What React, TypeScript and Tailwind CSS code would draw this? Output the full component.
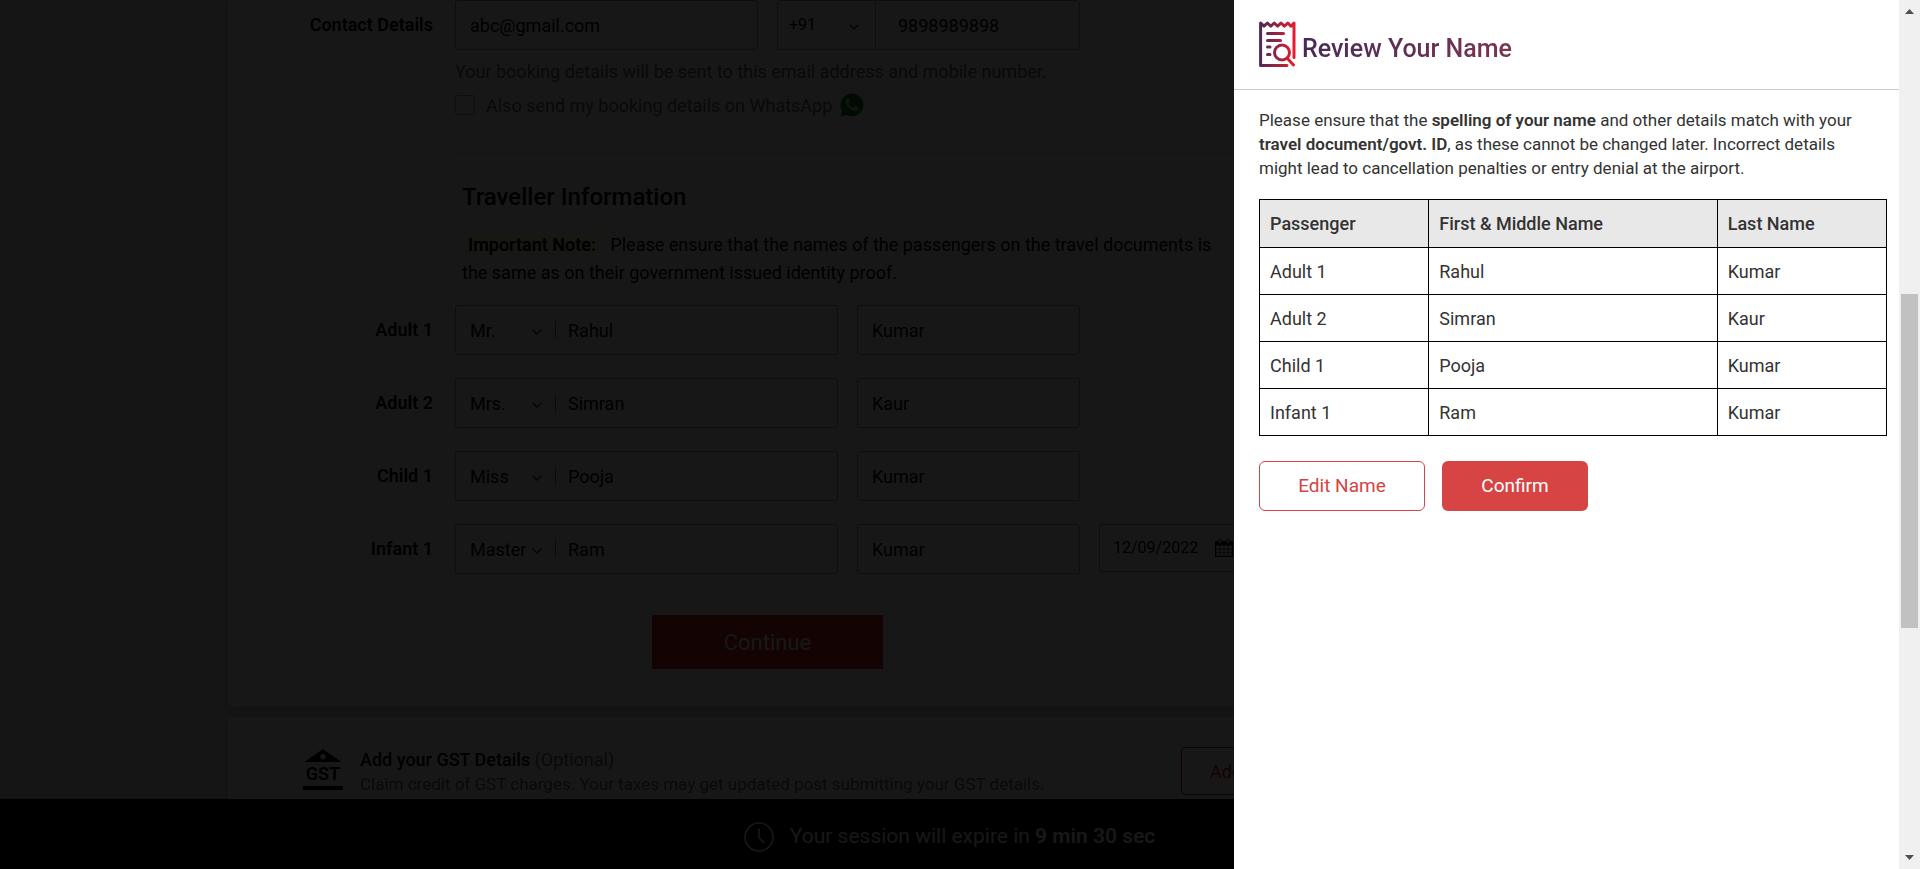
import type { ReactNode } from "react";

type Passenger = {
  type: string;
  title: string;
  first: string;
  last: string;
  dob?: string;
};

const passengers: Passenger[] = [
  { type: "Adult 1", title: "Mr.", first: "Rahul", last: "Kumar" },
  { type: "Adult 2", title: "Mrs.", first: "Simran", last: "Kaur" },
  { type: "Child 1", title: "Miss", first: "Pooja", last: "Kumar" },
  { type: "Infant 1", title: "Master", first: "Ram", last: "Kumar", dob: "12/09/2022" },
];

const titles = ["Mr.", "Mrs.", "Miss", "Master"];

function Chevron() {
  return (
    <svg
      viewBox="0 0 10 6"
      className="pointer-events-none mt-1 w-[10px] shrink-0"
      fill="none"
      stroke="#333"
      strokeWidth="1.4"
      aria-hidden="true"
    >
      <path d="M0.7 0.8 5 5 9.3 0.8" />
    </svg>
  );
}

function WhatsAppIcon() {
  return (
    <svg viewBox="0 0 24 24" className="size-6" aria-hidden="true">
      <path
        fill="#067a16"
        d="M12 .5a11.4 11.4 0 0 0-9.8 17.2L.6 23.5l5.9-1.6A11.4 11.4 0 1 0 12 .5Z"
      />
      <path
        fill="#cfd8cf"
        d="M8.9 6.2c-.3-.6-.5-.6-.9-.6-.8 0-2.3.9-2.3 3.1 0 2 1.4 4 2.2 4.9 1.7 2.2 4 3.9 7 4.4 2 .2 3.500-1.100 3.700-2.300.1-.7.1-1.100-.3-1.300l-2.500-1.200c-.4-.2-.7-.1-1 .3l-.9 1.100c-.2.3-.5.3-.9.2-1.900-.8-3.400-2.100-4.300-3.800-.2-.3-.1-.6.1-.8l.9-1.200c.1-.2.1-.4 0-.6Z"
      />
    </svg>
  );
}

function CalendarIcon() {
  return (
    <svg viewBox="0 0 18 18" className="size-[18px] shrink-0" aria-hidden="true">
      <rect x="0.6" y="3" width="16.8" height="14.4" fill="none" stroke="#111" strokeWidth="1.2" />
      <rect x="0.6" y="2.5" width="16.8" height="4" fill="#111" />
      <path d="M0.6 10h16.8M0.6 13.6h16.8M4.8 6v11M9 6v11M13.2 6v11" stroke="#333" strokeWidth="0.8" />
      <rect x="3.6" y="0.5" width="2.6" height="4.5" rx="1.2" fill="#fff" stroke="#111" strokeWidth="0.9" />
      <rect x="11.8" y="0.5" width="2.6" height="4.5" rx="1.2" fill="#fff" stroke="#111" strokeWidth="0.9" />
    </svg>
  );
}

function ClockIcon() {
  return (
    <svg viewBox="0 0 30 30" className="size-[30px]" fill="none" stroke="#fff" aria-hidden="true">
      <circle cx="15" cy="15" r="14" strokeWidth="1.6" />
      <path d="M15 6.5V16l5.5 5" strokeWidth="1.6" />
    </svg>
  );
}

function GstIcon() {
  return (
    <div className="flex w-10 flex-col items-center">
      <svg viewBox="0 0 40 13" className="w-10" aria-hidden="true">
        <path fillRule="evenodd" d="M20 0 38.5 13H1.5ZM20 5a2.700 2.700 0 1 0 .01 0Z" fill="#000" />
      </svg>
      <span className="py-[3px] text-[18px] leading-[18px] font-semibold">GST</span>
      <span className="h-1 w-10 bg-black" />
    </div>
  );
}

function ReviewIcon() {
  return (
    <svg viewBox="0 0 37 47" className="h-[47px] w-[37px]" fill="none" aria-hidden="true">
      <defs>
        <linearGradient id="review" gradientUnits="userSpaceOnUse" x1="0" y1="0" x2="37" y2="0">
          <stop offset="0" stopColor="#472a56" />
          <stop offset="1" stopColor="#ee1c2b" />
        </linearGradient>
      </defs>
      <g stroke="url(#review)" strokeWidth="3" strokeLinecap="round" strokeLinejoin="round">
        <path d="M28 44.5H1.6V2L5 5.2 8.4 2l3.4 3.2L15.2 2l3.400 3.200L22 2l3.400 3.200L28.800 2l3.200 3.200L35 2v34.500" />
        <path d="M8.5 12.5h16M8.500 19.500h13M8.500 26h2.500M8.500 33.500h2.500" />
        <circle cx="23" cy="31.5" r="7.5" />
        <path d="M28.5 37.5 34.500 44" />
      </g>
    </svg>
  );
}

function FormRow({ label, children }: { label: string; children: ReactNode }) {
  return (
    <div className="flex items-start gap-[22px]">
      <div className="flex h-12 w-[205px] shrink-0 items-center justify-end text-[18px] font-semibold">
        {label}
      </div>
      {children}
    </div>
  );
}

function BookingPage() {
  return (
    <div className="mx-auto flex max-w-[1443px] flex-col gap-[10px] text-black">
      <section className="rounded-b-[4px] bg-white pb-[38px] shadow-[0_3px_8px_rgba(0,0,0,0.2)]">
        <FormRow label="Contact Details">
          <div className="flex flex-1 flex-col">
            <div className="flex gap-[19px]">
              <input
                aria-label="Email"
                type="email"
                defaultValue="abc@gmail.com"
                className="h-[50px] w-[303px] rounded-[3px] border border-[#999] px-[14px] text-[18px]"
              />
              <div className="flex h-[50px] w-[303px] rounded-[3px] border border-[#999]">
                <div className="flex w-[98px] items-center border-r border-[#999] pr-4 pl-[11px]">
                  <select aria-label="Country code" className="w-0 flex-1 appearance-none text-[16px]" defaultValue="+91">
                    <option>+91</option>
                  </select>
                  <Chevron />
                </div>
                <input
                  aria-label="Mobile number"
                  type="tel"
                  defaultValue="9898989898"
                  className="w-0 flex-1 px-[22px] text-[18px]"
                />
              </div>
            </div>
            <p className="mt-[10px] text-[18px] leading-6 text-[#666]">
              Your booking details will be sent to this email address and mobile number.
            </p>
            <label className="mt-[9px] flex h-6 items-center text-[18px] text-[#666]">
              <input
                type="checkbox"
                className="mr-[11px] size-5 appearance-none rounded-[2px] border border-[#aaa]"
              />
              <span className="mr-2">Also send my booking details on WhatsApp</span>
              <WhatsAppIcon />
            </label>
            <hr className="mt-9 border-[#ddd]" />
          </div>
        </FormRow>

        <div className="pt-7 pl-[234px]">
          <h2 className="text-[24px] leading-[30px] font-medium">Traveller Information</h2>
          <p className="mt-[19px] max-w-[770px] text-[18px] leading-7">
            <span className="mr-1 bg-[#fff6d0] px-[6px] py-[3px] font-semibold">Important Note:</span>{" "}
            Please ensure that the names of the passengers on the travel documents is the same as on
            their government issued identity proof.
          </p>
        </div>

        <div className="mt-[18px] flex flex-col gap-[23px]">
          {passengers.map((p) => (
            <FormRow key={p.type} label={p.type}>
              <div className="flex items-start gap-[19px]">
                <div className="flex h-[50px] w-[383px] items-center rounded-[3px] border border-[#999] pl-[14px]">
                  <select
                    aria-label={`${p.type} title`}
                    defaultValue={p.title}
                    className="w-[62px] appearance-none text-[18px]"
                  >
                    {titles.map((t) => (
                      <option key={t}>{t}</option>
                    ))}
                  </select>
                  <Chevron />
                  <span className="mr-3 ml-[13px] h-[18px] w-px bg-[#777]" />
                  <input
                    aria-label={`${p.type} first and middle name`}
                    defaultValue={p.first}
                    className="w-0 flex-1 text-[18px]"
                  />
                </div>
                <input
                  aria-label={`${p.type} last name`}
                  defaultValue={p.last}
                  className="h-[50px] w-[223px] rounded-[3px] border border-[#999] px-[14px] text-[18px]"
                />
                {p.dob && (
                  <div className="flex h-12 w-[160px] items-center rounded-[3px] border border-[#999] pl-[13px]">
                    <input
                      aria-label={`${p.type} date of birth`}
                      defaultValue={p.dob}
                      className="w-[102px] text-[16px]"
                    />
                    <CalendarIcon />
                  </div>
                )}
              </div>
            </FormRow>
          ))}
        </div>

        <button
          type="button"
          className="mt-[41px] ml-[424px] flex h-[54px] w-[231px] items-center justify-center bg-[#cc2229] text-[22px] text-white"
        >
          Continue
        </button>
      </section>

      <section className="flex items-start rounded-[4px] bg-white pt-[30px] pb-[60px] pl-[75px] shadow-[0_3px_8px_rgba(0,0,0,0.2)]">
        <div className="mt-[2px]">
          <GstIcon />
        </div>
        <div className="ml-[17px] w-[821px] text-[17px] leading-[25px]">
          <h3 className="text-[18px] font-medium">
            Add your GST Details <span className="font-normal text-[#666]">(Optional)</span>
          </h3>
          <p className="text-[#666]">
            Claim credit of GST charges. Your taxes may get updated post submitting your GST details.
          </p>
        </div>
        <button
          type="button"
          className="h-12 rounded-[4px] border border-[#cc2229] px-7 text-[18px] text-[#cc2229]"
        >
          Add GST Details
        </button>
      </section>
    </div>
  );
}

function ReviewDrawer() {
  return (
    <aside
      role="dialog"
      aria-labelledby="review-title"
      className="absolute inset-y-0 right-0 w-[665px] max-w-full bg-white text-[#333]"
    >
      <header className="flex h-[90px] items-start gap-[6px] border-b border-[#ccc] pt-[21px] pl-[25px]">
        <ReviewIcon />
        <h1
          id="review-title"
          className="mt-3 flex-1 bg-linear-to-r from-[#472a56] to-[#e8202f] bg-clip-text text-[25px] leading-8 font-medium text-transparent"
        >
          Review Your Name
        </h1>
      </header>
      <div className="pr-3 pl-[25px]">
        <p className="pt-[18px] pr-6 text-[17px] leading-6">
          Please ensure that the <b className="font-semibold">spelling of your name</b> and other
          details match with your <b className="font-semibold">travel document/govt. ID</b>, as these
          cannot be changed later. Incorrect details might lead to cancellation penalties or entry
          denial at the airport.
        </p>
        <table className="mt-[19px] w-full table-fixed border-collapse text-left text-[18px]">
          <colgroup>
            <col className="w-[27%]" />
            <col className="w-[46%]" />
            <col className="w-[27%]" />
          </colgroup>
          <thead className="bg-[#e8e8e8]">
            <tr className="h-12">
              {["Passenger", "First & Middle Name", "Last Name"].map((h) => (
                <th key={h} className="border border-black px-[10px] font-medium">
                  {h}
                </th>
              ))}
            </tr>
          </thead>
          <tbody>
            {passengers.map((p) => (
              <tr key={p.type} className="h-[47px]">
                <td className="border border-black px-[10px]">{p.type}</td>
                <td className="border border-black px-[10px]">{p.first}</td>
                <td className="border border-black px-[10px]">{p.last}</td>
              </tr>
            ))}
          </tbody>
        </table>
        <div className="mt-[25px] flex gap-[17px] text-[19px]">
          <button
            type="button"
            className="h-[50px] w-[166px] rounded-md border border-[#d64444] text-[#d64444]"
          >
            Edit Name
          </button>
          <button type="button" className="h-[50px] w-[146px] rounded-md bg-[#d64444] text-white">
            Confirm
          </button>
        </div>
      </div>
    </aside>
  );
}

function ScrollTrack() {
  return (
    <div className="flex w-[21px] shrink-0 flex-col items-center bg-[#f0f0f0]" aria-hidden="true">
      <svg viewBox="0 0 21 20" className="w-[21px] shrink-0">
        <path d="M6 14h9l-4.5-5Z" fill="#505050" />
      </svg>
      <div className="flex w-full flex-1 flex-col px-[2px]">
        <div className="basis-[33%]" />
        <div className="basis-[40.3%] bg-[#c1c1c1]" />
      </div>
      <svg viewBox="0 0 21 20" className="w-[21px] shrink-0">
        <path d="M6 6h9l-4.5 5Z" fill="#505050" />
      </svg>
    </div>
  );
}

export default function App() {
  return (
    <div className="flex h-screen overflow-hidden font-[Roboto,sans-serif]">
      <div className="relative flex-1 overflow-hidden bg-[#e8e8e8]">
        <BookingPage />
        <footer className="absolute inset-x-0 bottom-0 flex h-[70px] items-center justify-center gap-4 bg-black pt-[6px] text-[21px] text-white">
          <ClockIcon />
          <p>
            Your session will expire in <b className="font-semibold">9 min 30 sec</b>
          </p>
        </footer>
        <div className="absolute inset-0 bg-black/91" />
        <ReviewDrawer />
      </div>
      <ScrollTrack />
    </div>
  );
}
